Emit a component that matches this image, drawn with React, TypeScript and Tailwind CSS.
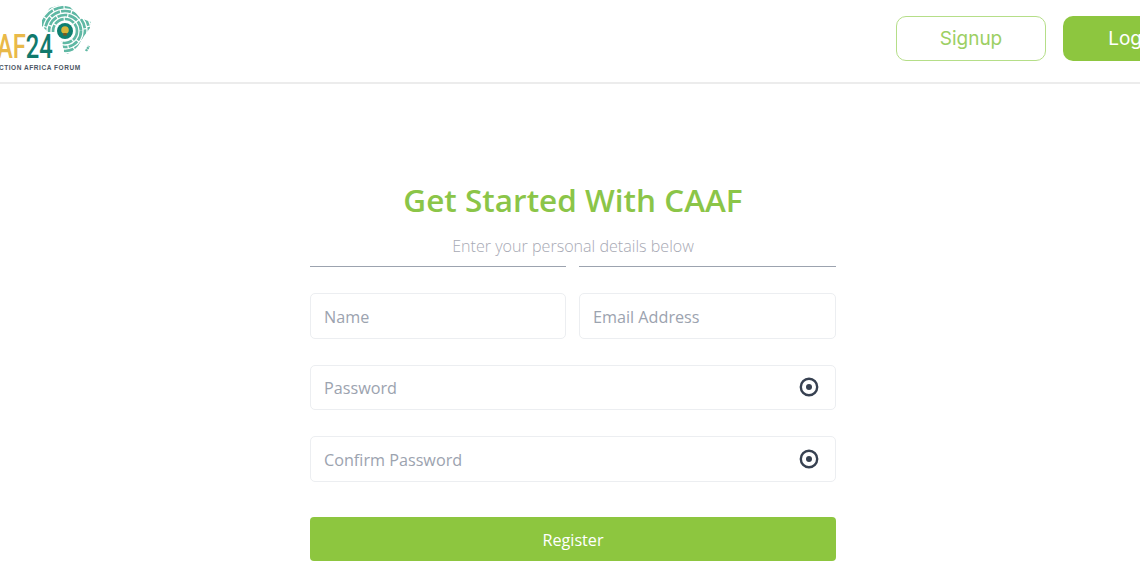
const segoe = "font-['Open_Sans','Noto_Sans',sans-serif]"

function EyeIcon() {
  return (
    <svg width="20" height="20" viewBox="0 0 20 20" fill="none" className="text-[#374151]">
      <circle cx="10" cy="10" r="8.2" stroke="currentColor" strokeWidth="2.4" />
      <circle cx="10" cy="10" r="3" fill="currentColor" />
    </svg>
  )
}

const africaOutline =
  '3,14 11,4 21,1 31,3 36,8 41,14 52,18 51,24 45,32 39,42 35,46 29,50 25,48 23,38 21,34 17,28 9,28 3,22'

function Logo() {
  const rings = [12, 16, 20, 24, 28, 32, 36]

  return (
    <div className="relative h-[72px] w-[92px] shrink-0">
      <svg width="56" height="56" viewBox="0 0 56 56" fill="none" className="absolute left-[39px] top-[4px]">
        <defs>
          <clipPath id="africa">
            <polygon points={africaOutline} />
          </clipPath>
        </defs>
        <g clipPath="url(#africa)">
          {rings.map((r) => (
            <circle key={r} cx="26" cy="27" r={r} stroke="#5fb8a4" strokeWidth="2.7" strokeDasharray="10 1.2" />
          ))}
        </g>
        <path d="M47 47 L50 42" stroke="#5fb8a4" strokeWidth="2.4" strokeDasharray="2 0.6" />
        <circle cx="26" cy="27" r="8" fill="#0f7f70" />
        <circle cx="26" cy="26" r="3.8" fill="#d7b63a" />
        <rect x="24.2" y="29" width="3.6" height="2.6" fill="#7a5b21" />
      </svg>
      <div className="absolute left-[-3px] top-[28px] flex origin-left scale-x-[0.72] font-['Roboto',sans-serif] text-[33px] font-medium leading-[38px]">
        <span className="text-[#e9b949]">AF</span>
        <span className="text-[#11796c]">24</span>
      </div>
      <span className="absolute left-[-1px] top-[64px] whitespace-nowrap font-['Liberation_Sans',sans-serif] text-[6.5px] font-bold leading-[8px] tracking-[0.55px] text-[#4b5563]">
        CTION AFRICA FORUM
      </span>
    </div>
  )
}

function Field({ placeholder, icon }: { placeholder: string; icon?: boolean }) {
  return (
    <div className="flex h-[45.5px] items-center justify-between rounded-[5px] border border-[#eceef1] bg-white pl-[13px] pr-[16px]">
      <span className={`pt-[2px] text-[16.2px] leading-6 text-[#9ca3af] ${segoe}`}>{placeholder}</span>
      {icon && <EyeIcon />}
    </div>
  )
}

export default function App() {
  return (
    <div className="h-[570px] w-[1140px] overflow-hidden bg-white">
      <header className="flex h-[84px] items-start justify-between border-b-2 border-[#ececec]">
        <Logo />
        <div className="mr-[-63px] flex gap-[17px] pt-[16px]">
          <button className="h-[45px] w-[150px] rounded-[10px] border border-[#b5de88] bg-white pt-[2px] font-['Inter',sans-serif] text-[19px] text-[#9ccf63]">
            Signup
          </button>
          <button className="h-[45px] w-[140px] rounded-[10px] bg-[#8dc63f] pt-[2px] font-['Inter',sans-serif] text-[19px] text-white">
            Login
          </button>
        </div>
      </header>

      <main className={`ml-[310px] w-[526px] pt-[96px] ${segoe}`}>
        <h1 className="text-center text-[31.5px] font-semibold leading-[40px] text-[#8bc548]">Get Started With CAAF</h1>
        <p className="mt-[14px] text-center text-[16.1px] font-light leading-[24px] text-[#a7a9b4]">
          Enter your personal details below
        </p>
        <div className="mt-[8px] grid grid-cols-[256px_257px] gap-[13px]">
          <div className="h-px bg-[#9ca3af]" />
          <div className="h-px bg-[#9ca3af]" />
        </div>
        <div className="mt-[26px] grid grid-cols-[256px_257px] gap-[13px]">
          <Field placeholder="Name" />
          <Field placeholder="Email Address" />
        </div>
        <div className="mt-[26px] flex flex-col gap-[26px]">
          <Field placeholder="Password" icon />
          <Field placeholder="Confirm Password" icon />
        </div>
        <button className="mt-[35.5px] h-[43.5px] w-full rounded-[4px] bg-[#8dc63f] pt-[2px] text-[16.2px] text-white">
          Register
        </button>
      </main>
    </div>
  )
}
